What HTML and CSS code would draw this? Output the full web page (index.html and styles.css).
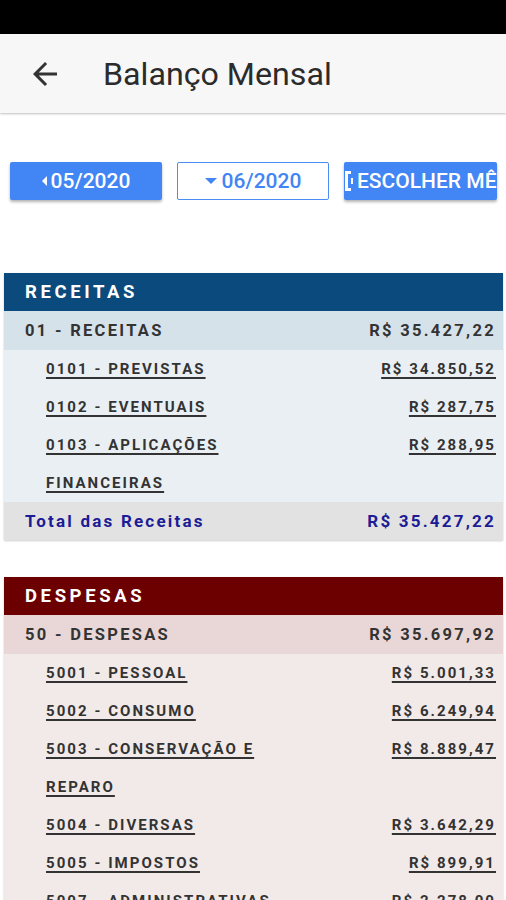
FILE: index.html
```html
<!DOCTYPE html>
<html lang="pt-BR">
<head>
<meta charset="utf-8">
<title>Balanço Mensal</title>
<link rel="stylesheet" href="styles.css">
</head>
<body>
<div class="statusbar"></div>
<header class="appbar">
  <svg class="back" viewBox="0 0 24 24" width="36" height="36"><path d="M20 11H7.83l5.59-5.59L12 4l-8 8 8 8 1.41-1.41L7.83 13H20v-2z" fill="#333"/></svg>
  <h1 class="title">Balanço Mensal</h1>
</header>
<div class="toolbar">
  <button class="btn btn-fill"><span class="tri tri-left"></span>05/2020</button>
  <button class="btn btn-outline"><span class="tri tri-down"></span>06/2020</button>
  <button class="btn btn-fill btn-clip"><svg class="cal" viewBox="0 0 8 22" width="8" height="22"><path d="M0 1h6v3H3v14h3v3H0z" fill="#fff"/><path d="M6 8h2v6H6z" fill="#fff"/></svg>ESCOLHER MÊS</button>
</div>

<section class="card rec">
  <div class="card-head">RECEITAS</div>
  <div class="row group"><span>01 - RECEITAS</span><span>R$ 35.427,22</span></div>
  <div class="row sub"><a>0101 - PREVISTAS</a><a>R$ 34.850,52</a></div>
  <div class="row sub"><a>0102 - EVENTUAIS</a><a>R$ 287,75</a></div>
  <div class="row sub"><a>0103 - APLICAÇÕES FINANCEIRAS</a><a>R$ 288,95</a></div>
  <div class="row total"><span>Total das Receitas</span><span>R$ 35.427,22</span></div>
</section>

<section class="card desp">
  <div class="card-head">DESPESAS</div>
  <div class="row group"><span>50 - DESPESAS</span><span>R$ 35.697,92</span></div>
  <div class="row sub"><a>5001 - PESSOAL</a><a>R$ 5.001,33</a></div>
  <div class="row sub"><a>5002 - CONSUMO</a><a>R$ 6.249,94</a></div>
  <div class="row sub"><a>5003 - CONSERVAÇÃO E REPARO</a><a>R$ 8.889,47</a></div>
  <div class="row sub"><a>5004 - DIVERSAS</a><a>R$ 3.642,29</a></div>
  <div class="row sub"><a>5005 - IMPOSTOS</a><a>R$ 899,91</a></div>
  <div class="row sub"><a>5007 - ADMINISTRATIVAS</a><a>R$ 2.278,00</a></div>
</section>
</body>
</html>
```
FILE: styles.css
```css
* { box-sizing: border-box; }
html, body { margin: 0; padding: 0; }
body {
  background: #fff;
  font-family: Roboto, "Noto Sans", "Liberation Sans", sans-serif;
  color: #333;
  width: 506px;
  height: 900px;
  overflow: hidden;
}
.statusbar { height: 34px; background: #000; }
.appbar {
  height: 79px;
  background: #f7f7f7;
  display: flex;
  align-items: center;
  box-shadow: 0 1px 2px rgba(0,0,0,0.25);
  position: relative;
}
.back { margin-left: 27px; margin-top: 1px; flex: none; }
.title {
  margin: 0 0 0 40px;
  font-size: 32.2px;
  font-weight: 400;
  color: #2b2b2b;
}
.toolbar {
  display: flex;
  gap: 15px;
  padding: 49px 0 0 10px;
}
.btn {
  width: 152px;
  height: 38px;
  border-radius: 2px;
  font-family: Roboto, sans-serif;
  font-size: 21px;
  font-weight: 500;
  display: flex;
  align-items: center;
  justify-content: center;
  padding: 0;
  white-space: nowrap;
}
.btn-fill {
  background: #4285f4;
  border: none;
  color: #fff;
  box-shadow: 0 2px 3px rgba(0,0,0,0.3);
}
.btn-outline {
  background: #fff;
  border: 1px solid #4a8cf5;
  color: #4285f4;
}
.btn-clip {
  justify-content: flex-start;
  overflow: hidden;
  padding-left: 0;
  width: 153px;
}
.cal { margin: 0 4px 0 1px; flex: none; }
.tri { display: inline-block; width: 0; height: 0; margin-right: 4px; }
.tri-left {
  border-top: 5px solid transparent;
  border-bottom: 5px solid transparent;
  border-right: 5px solid #fff;
}
.tri-down {
  border-left: 6px solid transparent;
  border-right: 6px solid transparent;
  border-top: 6px solid #4285f4;
  margin-right: 5px;
}
.card {
  margin: 0 3px 0 4px;
  box-shadow: 0 1px 2px rgba(0,0,0,0.2);
}
.rec { margin-top: 73px; }
.desp { margin-top: 37px; }
.card-head {
  height: 38px;
  line-height: 38px;
  padding-left: 21px;
  color: #fff;
  font-size: 18.5px;
  font-weight: 700;
  letter-spacing: 3.6px;
}
.rec .card-head { background: #0b4a7c; }
.desp .card-head { background: #6c0000; }
.row {
  display: flex;
  justify-content: space-between;
  align-items: flex-start;
  font-weight: 700;
  line-height: 38px;
}
.row > :last-child { text-align: right; }
.group {
  font-size: 16.5px;
  letter-spacing: 2.3px;
  padding: 0 7px 0 21px;
  color: #333;
  line-height: 39px;
}
.rec .group { background: #d6e2ea; }
.desp .group { background: #e9d7d7; }
.sub {
  font-size: 15px;
  padding: 0 7px 0 42px;
  letter-spacing: 2.05px;
}
.sub a {
  color: #333;
  text-decoration: underline;
  text-decoration-thickness: 1.5px;
  text-underline-offset: 3px;
}
.sub a:first-child { max-width: 260px; }
.rec .sub { background: #e9eff3; }
.desp .sub { background: #f2e9e9; }
.total {
  font-size: 17px;
  padding: 0 7px 0 21px;
  background: #e2e2e2;
  color: #1c1c96;
  letter-spacing: 2.2px;
}
```
